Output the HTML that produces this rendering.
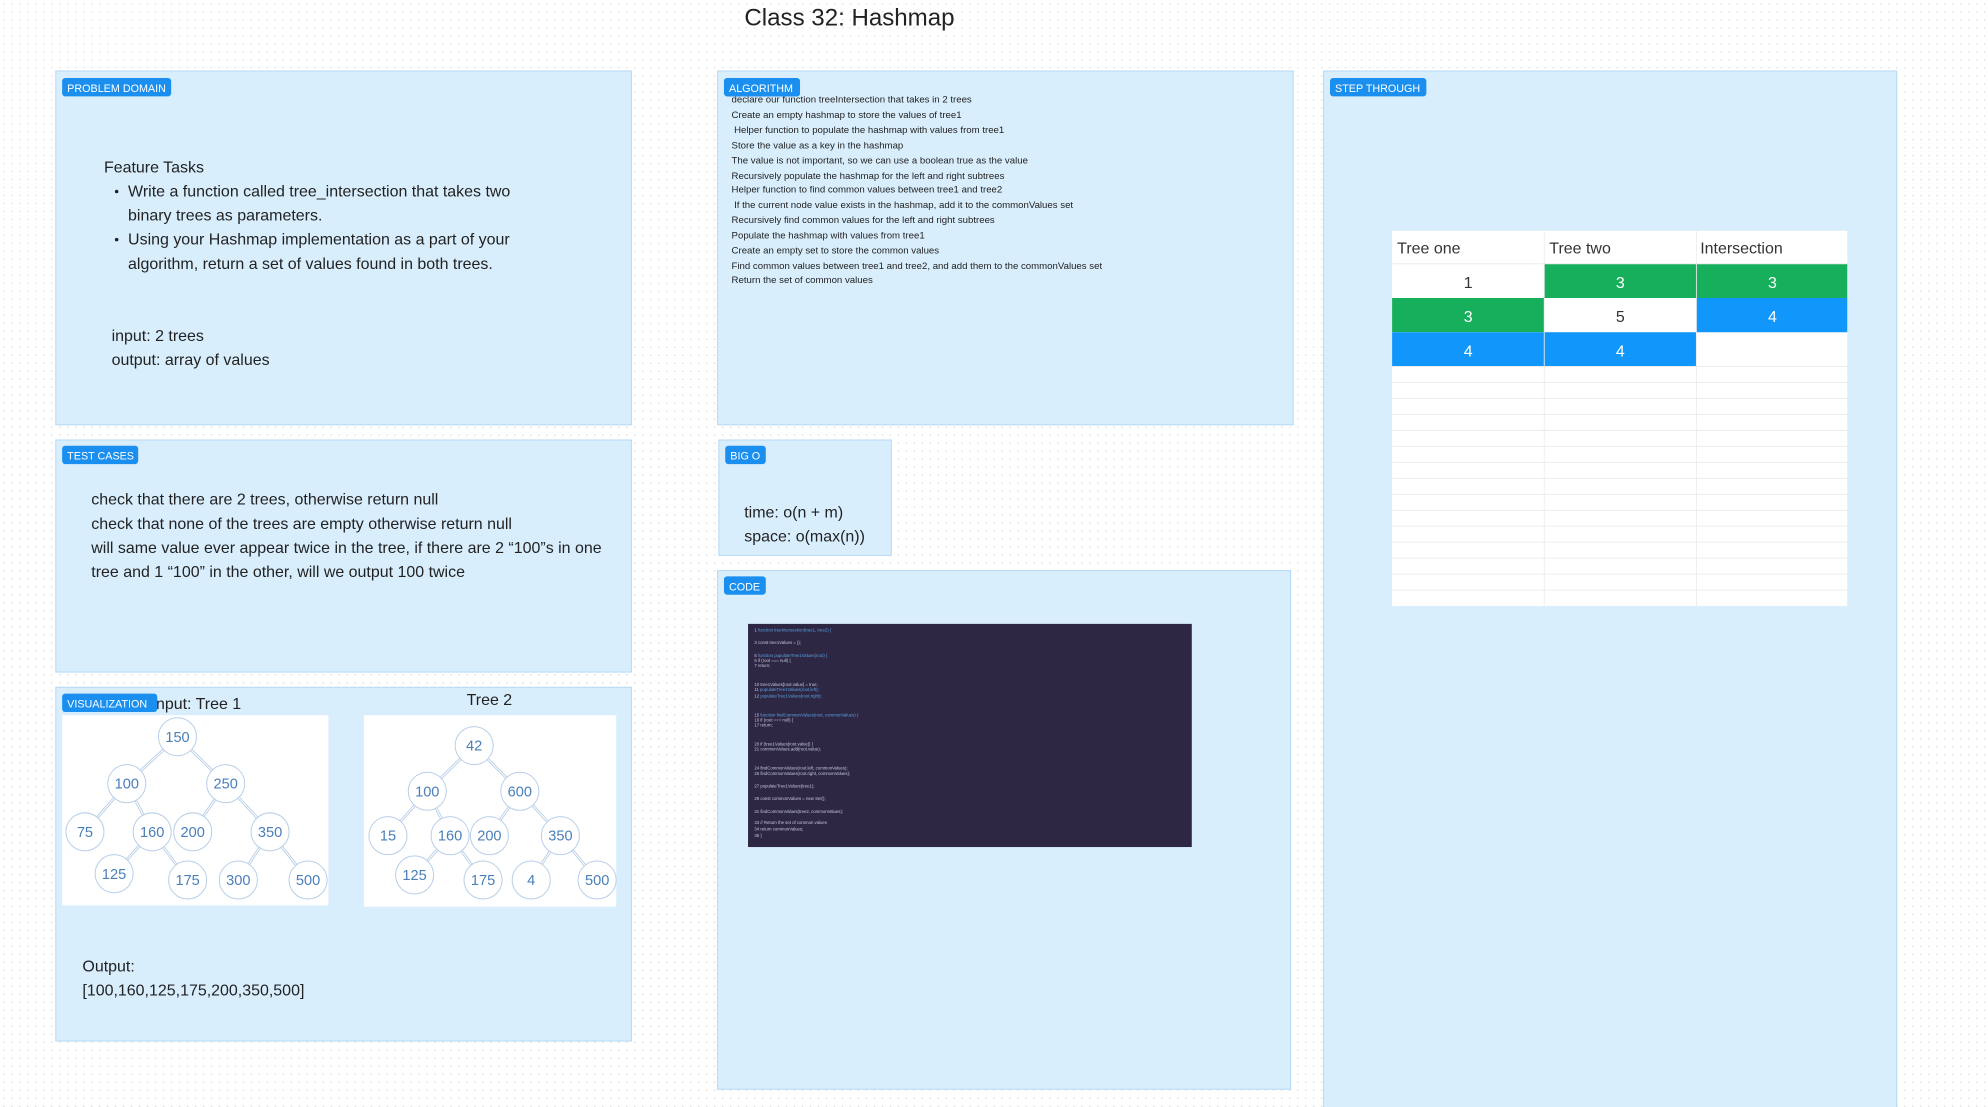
<!DOCTYPE html>
<html><head><meta charset="utf-8"><style>
html,body{margin:0;padding:0;background:#fff;width:1988px;height:1107px;overflow:hidden}
svg{display:block}
text{font-family:"Liberation Sans",sans-serif}
</style></head><body>
<svg width="1988" height="1107" viewBox="0 0 1568 873" preserveAspectRatio="none" xmlns="http://www.w3.org/2000/svg">
<defs>
<pattern id="dots" width="6.3" height="6.3" patternUnits="userSpaceOnUse"><circle cx="3" cy="3" r="0.7" fill="#e4e4e4"/></pattern>
</defs>
<rect width="1568" height="873" fill="#fff"/>
<rect width="1568" height="873" fill="url(#dots)"/>
<text x="670" y="20" font-size="19" text-anchor="middle" fill="#222">Class 32: Hashmap</text>

<g fill="#d9eefd" stroke="#b5d9f5" stroke-width="0.8">
<rect x="44" y="56" width="454" height="279"/>
<rect x="566" y="56" width="454" height="279"/>
<rect x="1044" y="56" width="452" height="830"/>
<rect x="44" y="347" width="454" height="183"/>
<rect x="567" y="347" width="136" height="91"/>
<rect x="566" y="450" width="452" height="409"/>
<rect x="44" y="542" width="454" height="279"/>
</g>

<g font-size="8.5" fill="#fff">
<rect x="49" y="61.5" width="86" height="14.5" rx="2.5" fill="#1a8ff0"/><text x="53" y="72.5">PROBLEM DOMAIN</text>
<rect x="571" y="61.5" width="60" height="14.5" rx="2.5" fill="#1a8ff0"/><text x="575" y="72.5">ALGORITHM</text>
<rect x="1049" y="61.5" width="76" height="14.5" rx="2.5" fill="#1a8ff0"/><text x="1053" y="72.5">STEP THROUGH</text>
<rect x="49" y="351.5" width="60" height="14.5" rx="2.5" fill="#1a8ff0"/><text x="53" y="362.5">TEST CASES</text>
<rect x="572" y="351.5" width="32" height="14.5" rx="2.5" fill="#1a8ff0"/><text x="576" y="362.5">BIG O</text>
<rect x="571" y="454.5" width="33" height="14.5" rx="2.5" fill="#1a8ff0"/><text x="575" y="465.5">CODE</text>
</g>

<g font-size="12.6" fill="#222">
<text x="82" y="136">Feature Tasks</text>
<circle cx="92" cy="151" r="1.4"/><circle cx="92" cy="189" r="1.4"/>
<text x="101" y="155">Write a function called tree_intersection that takes two</text>
<text x="101" y="174">binary trees as parameters.</text>
<text x="101" y="193">Using your Hashmap implementation as a part of your</text>
<text x="101" y="212">algorithm, return a set of values found in both trees.</text>
<text x="88" y="269">input: 2 trees</text>
<text x="88" y="288">output: array of values</text>

<text x="72" y="398">check that there are 2 trees, otherwise return null</text>
<text x="72" y="417">check that none of the trees are empty otherwise return null</text>
<text x="72" y="436">will same value ever appear twice in the tree, if there are 2 “100”s in one</text>
<text x="72" y="455">tree and 1 “100” in the other, will we output 100 twice</text>

<text x="587" y="408">time: o(n + m)</text>
<text x="587" y="427">space: o(max(n))</text>

<text x="65" y="766">Output:</text>
<text x="65" y="785">[100,160,125,175,200,350,500]</text>
<text x="123" y="559">nput: Tree 1</text>
<text x="386" y="556" text-anchor="middle">Tree 2</text>
</g>

<g font-size="7.6" fill="#222">
<text x="577" y="81">declare our function treeIntersection that takes in 2 trees</text>
<text x="577" y="93">Create an empty hashmap to store the values of tree1</text>
<text x="579" y="105">Helper function to populate the hashmap with values from tree1</text>
<text x="577" y="117">Store the value as a key in the hashmap</text>
<text x="577" y="129">The value is not important, so we can use a boolean true as the value</text>
<text x="577" y="141">Recursively populate the hashmap for the left and right subtrees</text>
<text x="577" y="152">Helper function to find common values between tree1 and tree2</text>
<text x="579" y="164">If the current node value exists in the hashmap, add it to the commonValues set</text>
<text x="577" y="176">Recursively find common values for the left and right subtrees</text>
<text x="577" y="188">Populate the hashmap with values from tree1</text>
<text x="577" y="200">Create an empty set to store the common values</text>
<text x="577" y="212">Find common values between tree1 and tree2, and add them to the commonValues set</text>
<text x="577" y="223">Return the set of common values</text>
</g>
<rect x="572" y="62" width="59" height="14" rx="2.5" fill="#1a8ff0"/><text x="575" y="72.5" font-size="8.5" fill="#fff">ALGORITHM</text>

<!-- code image -->
<rect x="590" y="492" width="350" height="176" fill="#2d2744"/>
<g font-family="Liberation Mono,monospace" font-size="3.4" fill="#c8c6d8">
<text x="595" y="498">1  <tspan fill="#5aa0e0">function treeIntersection(tree1, tree2) {</tspan></text>
<text x="595" y="508">3    const tree1Values = {};</text>
<text x="595" y="518">5    <tspan fill="#5aa0e0">function populateTree1Values(root) {</tspan></text>
<text x="595" y="522">6      if (root === null) {</text>
<text x="595" y="526">7        return;</text>
<text x="595" y="541">10     tree1Values[root.value] = true;</text>
<text x="595" y="545">11     <tspan fill="#5aa0e0">populateTree1Values(root.left);</tspan></text>
<text x="595" y="550">12     <tspan fill="#5aa0e0">populateTree1Values(root.right);</tspan></text>
<text x="595" y="565">15   <tspan fill="#5aa0e0">function findCommonValues(root, commonValues) {</tspan></text>
<text x="595" y="569">16     if (root === null) {</text>
<text x="595" y="573">17       return;</text>
<text x="595" y="588">20     if (tree1Values[root.value]) {</text>
<text x="595" y="592">21       commonValues.add(root.value);</text>
<text x="595" y="607">24     findCommonValues(root.left, commonValues);</text>
<text x="595" y="611">25     findCommonValues(root.right, commonValues);</text>
<text x="595" y="621">27   populateTree1Values(tree1);</text>
<text x="595" y="631">29   const commonValues = new Set();</text>
<text x="595" y="641">31   findCommonValues(tree2, commonValues);</text>
<text x="595" y="650">33   // Return the set of common values</text>
<text x="595" y="655">34   return commonValues;</text>
<text x="595" y="660">35 }</text>
</g>

<!-- table -->
<rect x="1098" y="182" width="359" height="296" fill="#fff"/>
<rect x="1218" y="208" width="239" height="27" fill="#17ae5c"/>
<rect x="1098" y="235" width="120" height="27" fill="#17ae5c"/>
<rect x="1338" y="235" width="119" height="27" fill="#1196fb"/>
<rect x="1098" y="262" width="240" height="27" fill="#1196fb"/>
<g stroke="#ececec" stroke-width="0.7">
<line x1="1218" y1="182" x2="1218" y2="478"/><line x1="1338" y1="182" x2="1338" y2="478"/>
<line x1="1098" y1="208" x2="1457" y2="208"/>
<line x1="1098" y1="301.6" x2="1457" y2="301.6"/><line x1="1098" y1="314.2" x2="1457" y2="314.2"/>
<line x1="1098" y1="326.8" x2="1457" y2="326.8"/><line x1="1098" y1="339.4" x2="1457" y2="339.4"/>
<line x1="1098" y1="352" x2="1457" y2="352"/><line x1="1098" y1="364.6" x2="1457" y2="364.6"/>
<line x1="1098" y1="377.2" x2="1457" y2="377.2"/><line x1="1098" y1="389.8" x2="1457" y2="389.8"/>
<line x1="1098" y1="402.4" x2="1457" y2="402.4"/><line x1="1098" y1="415" x2="1457" y2="415"/>
<line x1="1098" y1="427.6" x2="1457" y2="427.6"/><line x1="1098" y1="440.2" x2="1457" y2="440.2"/>
<line x1="1098" y1="452.8" x2="1457" y2="452.8"/><line x1="1098" y1="465.4" x2="1457" y2="465.4"/>
<line x1="1098" y1="289" x2="1457" y2="289"/>
</g>
<g font-size="12.6" fill="#333">
<text x="1102" y="200">Tree one</text><text x="1222" y="200">Tree two</text><text x="1341" y="200">Intersection</text>
<text x="1158" y="227" text-anchor="middle">1</text>
<text x="1278" y="254" text-anchor="middle">5</text>
</g>
<g font-size="12.6" fill="#fff" text-anchor="middle">
<text x="1278" y="227">3</text><text x="1398" y="227">3</text>
<text x="1158" y="254">3</text><text x="1398" y="254">4</text>
<text x="1158" y="281">4</text><text x="1278" y="281">4</text>
</g>

<!-- trees -->
<rect x="49" y="564" width="210" height="150" fill="#fff"/>
<rect x="287" y="564" width="199" height="151" fill="#fff"/>
<g stroke="#b8cde6" stroke-width="2.2" fill="none">
<path d="M140 581L100 618M140 581L178 618M100 618L67 656M100 618L120 656M178 618L152 656M178 618L213 656M120 656L90 689M120 656L148 694M213 656L188 694M213 656L243 694"/>
<path d="M374 588L337 624M374 588L410 624M337 624L306 659M337 624L355 659M410 624L386 659M410 624L442 659M355 659L327 690M355 659L381 694M442 659L419 694M442 659L471 694"/>
</g>
<g stroke="#fff" stroke-width="0.8" fill="none">
<path d="M140 581L100 618M140 581L178 618M100 618L67 656M100 618L120 656M178 618L152 656M178 618L213 656M120 656L90 689M120 656L148 694M213 656L188 694M213 656L243 694"/>
<path d="M374 588L337 624M374 588L410 624M337 624L306 659M337 624L355 659M410 624L386 659M410 624L442 659M355 659L327 690M355 659L381 694M442 659L419 694M442 659L471 694"/>
</g>
<g fill="#fff" stroke="#b9cfe8" stroke-width="0.8">
<circle cx="140" cy="581" r="15"/><circle cx="100" cy="618" r="15"/><circle cx="178" cy="618" r="15"/>
<circle cx="67" cy="656" r="15"/><circle cx="120" cy="656" r="15"/><circle cx="152" cy="656" r="15"/><circle cx="213" cy="656" r="15"/>
<circle cx="90" cy="689" r="15"/><circle cx="148" cy="694" r="15"/><circle cx="188" cy="694" r="15"/><circle cx="243" cy="694" r="15"/>
<circle cx="374" cy="588" r="15"/><circle cx="337" cy="624" r="15"/><circle cx="410" cy="624" r="15"/>
<circle cx="306" cy="659" r="15"/><circle cx="355" cy="659" r="15"/><circle cx="386" cy="659" r="15"/><circle cx="442" cy="659" r="15"/>
<circle cx="327" cy="690" r="15"/><circle cx="381" cy="694" r="15"/><circle cx="419" cy="694" r="15"/><circle cx="471" cy="694" r="15"/>
</g>
<g font-size="11.5" fill="#4a7fb8" text-anchor="middle">
<text x="140" y="585">150</text><text x="100" y="622">100</text><text x="178" y="622">250</text>
<text x="67" y="660">75</text><text x="120" y="660">160</text><text x="152" y="660">200</text><text x="213" y="660">350</text>
<text x="90" y="693">125</text><text x="148" y="698">175</text><text x="188" y="698">300</text><text x="243" y="698">500</text>
<text x="374" y="592">42</text><text x="337" y="628">100</text><text x="410" y="628">600</text>
<text x="306" y="663">15</text><text x="355" y="663">160</text><text x="386" y="663">200</text><text x="442" y="663">350</text>
<text x="327" y="694">125</text><text x="381" y="698">175</text><text x="419" y="698">4</text><text x="471" y="698">500</text>
</g>
<rect x="49" y="547" width="75" height="14.5" rx="2.5" fill="#1a8ff0"/><text x="53" y="558" font-size="8.5" fill="#fff">VISUALIZATION</text>
</svg>
</body></html>
